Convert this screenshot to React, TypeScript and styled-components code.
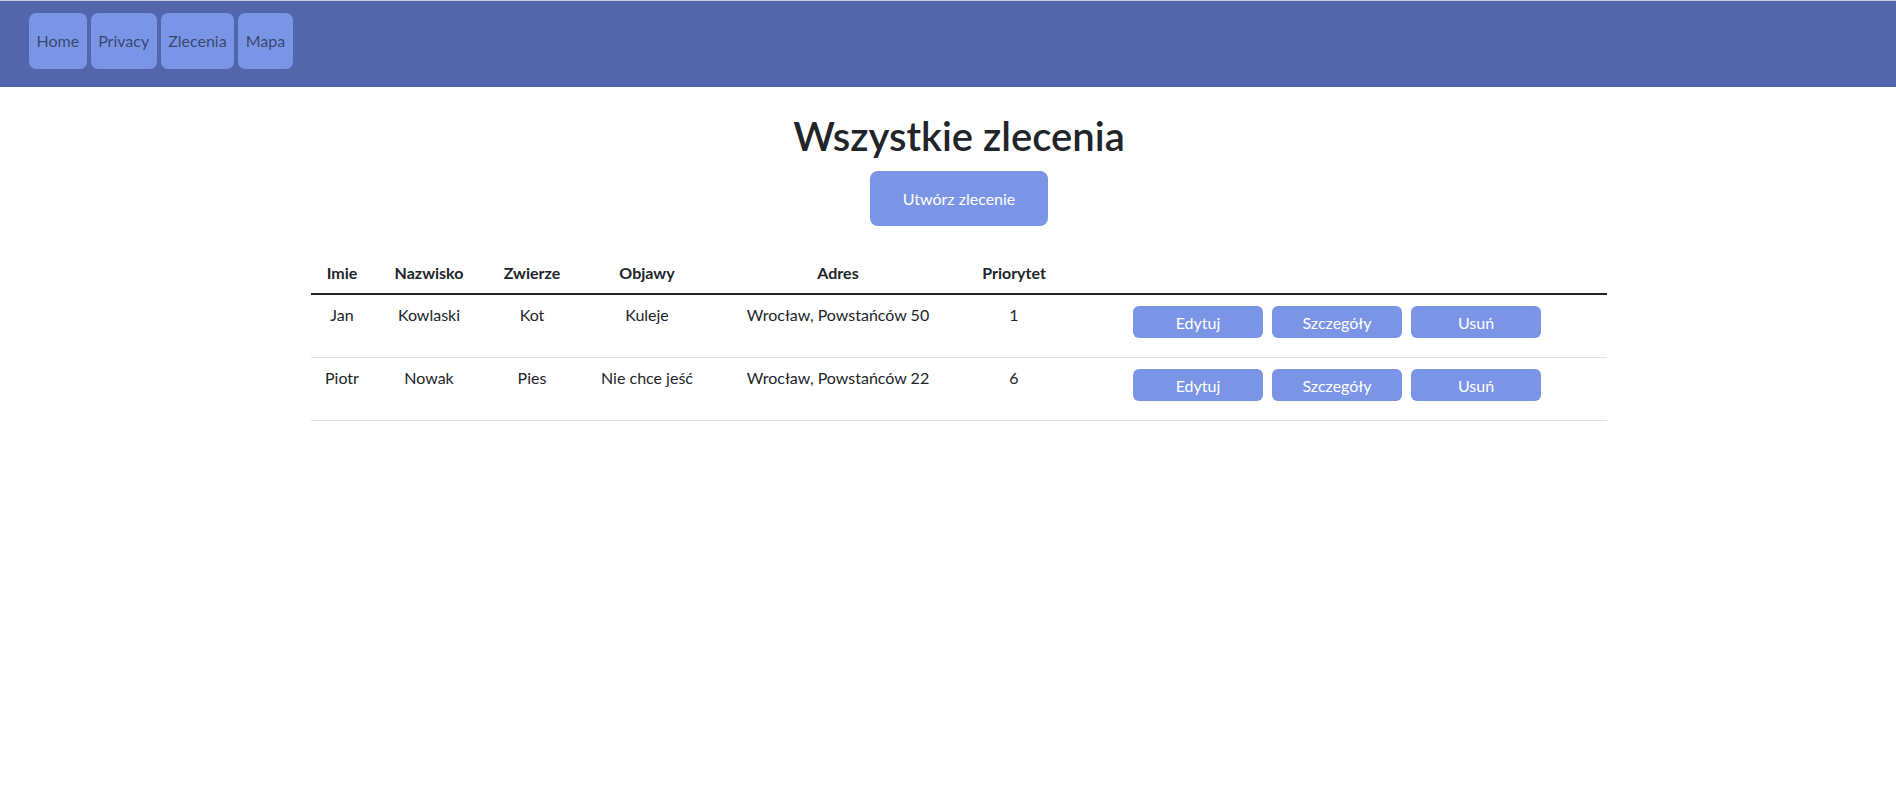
import React from "react";
import styled, { createGlobalStyle } from "styled-components";

const GlobalStyle = createGlobalStyle`
  *, *::before, *::after { box-sizing: border-box; }
  body {
    margin: 0;
    font-family: "Lato", "Liberation Sans", sans-serif;
    font-size: 16px;
    line-height: 1.5;
    color: #212529;
    background: #ffffff;
  }
`;

const NavBar = styled.header`
  height: 87px;
  background: #5266ac;
  border-top: 1px solid #c9cfe3;
  padding: 12px 0 0 29px;
`;

const NavList = styled.nav`
  display: flex;
  gap: 4px;
`;

const NavLink = styled.a`
  display: flex;
  align-items: center;
  height: 56px;
  padding: 0 7.5px;
  background: #7a94e6;
  border-radius: 7px;
  color: rgba(0, 0, 0, 0.55);
  font-size: 16px;
  text-decoration: none;
  cursor: pointer;
`;

const Main = styled.main`
  padding-left: 22px;
`;

const Container = styled.div`
  width: 1296px;
  margin: 0 auto;
  display: flex;
  flex-direction: column;
  align-items: center;
`;

const Title = styled.h1`
  margin: 25px 0 0;
  font-size: 40px;
  font-weight: 600;
  line-height: 1.2;
  color: #212529;
`;

const CreateButton = styled.button`
  margin-top: 11px;
  height: 55px;
  padding: 0 33px;
  border: none;
  border-radius: 8px;
  background: #7a94e6;
  color: #ffffff;
  font-family: inherit;
  font-size: 16px;
  cursor: pointer;
`;

const Table = styled.table`
  margin-top: 27px;
  width: 1296px;
  border-collapse: collapse;
  table-layout: fixed;
`;

const HeadCell = styled.th`
  padding: 8px;
  font-weight: 700;
  text-align: center;
  line-height: 24px;
  border-bottom: 2px solid #212529;
`;

const Cell = styled.td`
  padding: 8px;
  text-align: center;
  vertical-align: top;
  line-height: 24px;
  border-bottom: 1px solid #dee2e6;
`;

const Actions = styled.div`
  display: flex;
  justify-content: center;
  gap: 9px;
  padding: 3px 0 11px;
`;

const ActionButton = styled.button`
  width: 130px;
  height: 32px;
  padding: 0;
  border: none;
  border-radius: 6px;
  background: #7a94e6;
  color: #ffffff;
  font-family: inherit;
  font-size: 16px;
  cursor: pointer;
`;

const columns: { label: string; width: number }[] = [
  { label: "Imie", width: 62 },
  { label: "Nazwisko", width: 112 },
  { label: "Zwierze", width: 94 },
  { label: "Objawy", width: 136 },
  { label: "Adres", width: 246 },
  { label: "Priorytet", width: 106 },
  { label: "", width: 540 },
];

const orders = [
  { imie: "Jan", nazwisko: "Kowlaski", zwierze: "Kot", objawy: "Kuleje", adres: "Wrocław, Powstańców 50", priorytet: 1 },
  { imie: "Piotr", nazwisko: "Nowak", zwierze: "Pies", objawy: "Nie chce jeść", adres: "Wrocław, Powstańców 22", priorytet: 6 },
];

export default function App() {
  return (
    <>
      <GlobalStyle />
      <NavBar>
        <NavList>
          <NavLink>Home</NavLink>
          <NavLink>Privacy</NavLink>
          <NavLink>Zlecenia</NavLink>
          <NavLink>Mapa</NavLink>
        </NavList>
      </NavBar>
      <Main>
        <Container>
          <Title>Wszystkie zlecenia</Title>
          <CreateButton>Utwórz zlecenie</CreateButton>
          <Table>
            <colgroup>
              {columns.map((c, i) => (
                <col key={i} style={{ width: c.width }} />
              ))}
            </colgroup>
            <thead>
              <tr>
                {columns.map((c, i) => (
                  <HeadCell key={i}>{c.label}</HeadCell>
                ))}
              </tr>
            </thead>
            <tbody>
              {orders.map((o) => (
                <tr key={o.imie}>
                  <Cell>{o.imie}</Cell>
                  <Cell>{o.nazwisko}</Cell>
                  <Cell>{o.zwierze}</Cell>
                  <Cell>{o.objawy}</Cell>
                  <Cell>{o.adres}</Cell>
                  <Cell>{o.priorytet}</Cell>
                  <Cell>
                    <Actions>
                      <ActionButton>Edytuj</ActionButton>
                      <ActionButton>Szczegóły</ActionButton>
                      <ActionButton>Usuń</ActionButton>
                    </Actions>
                  </Cell>
                </tr>
              ))}
            </tbody>
          </Table>
        </Container>
      </Main>
    </>
  );
}
